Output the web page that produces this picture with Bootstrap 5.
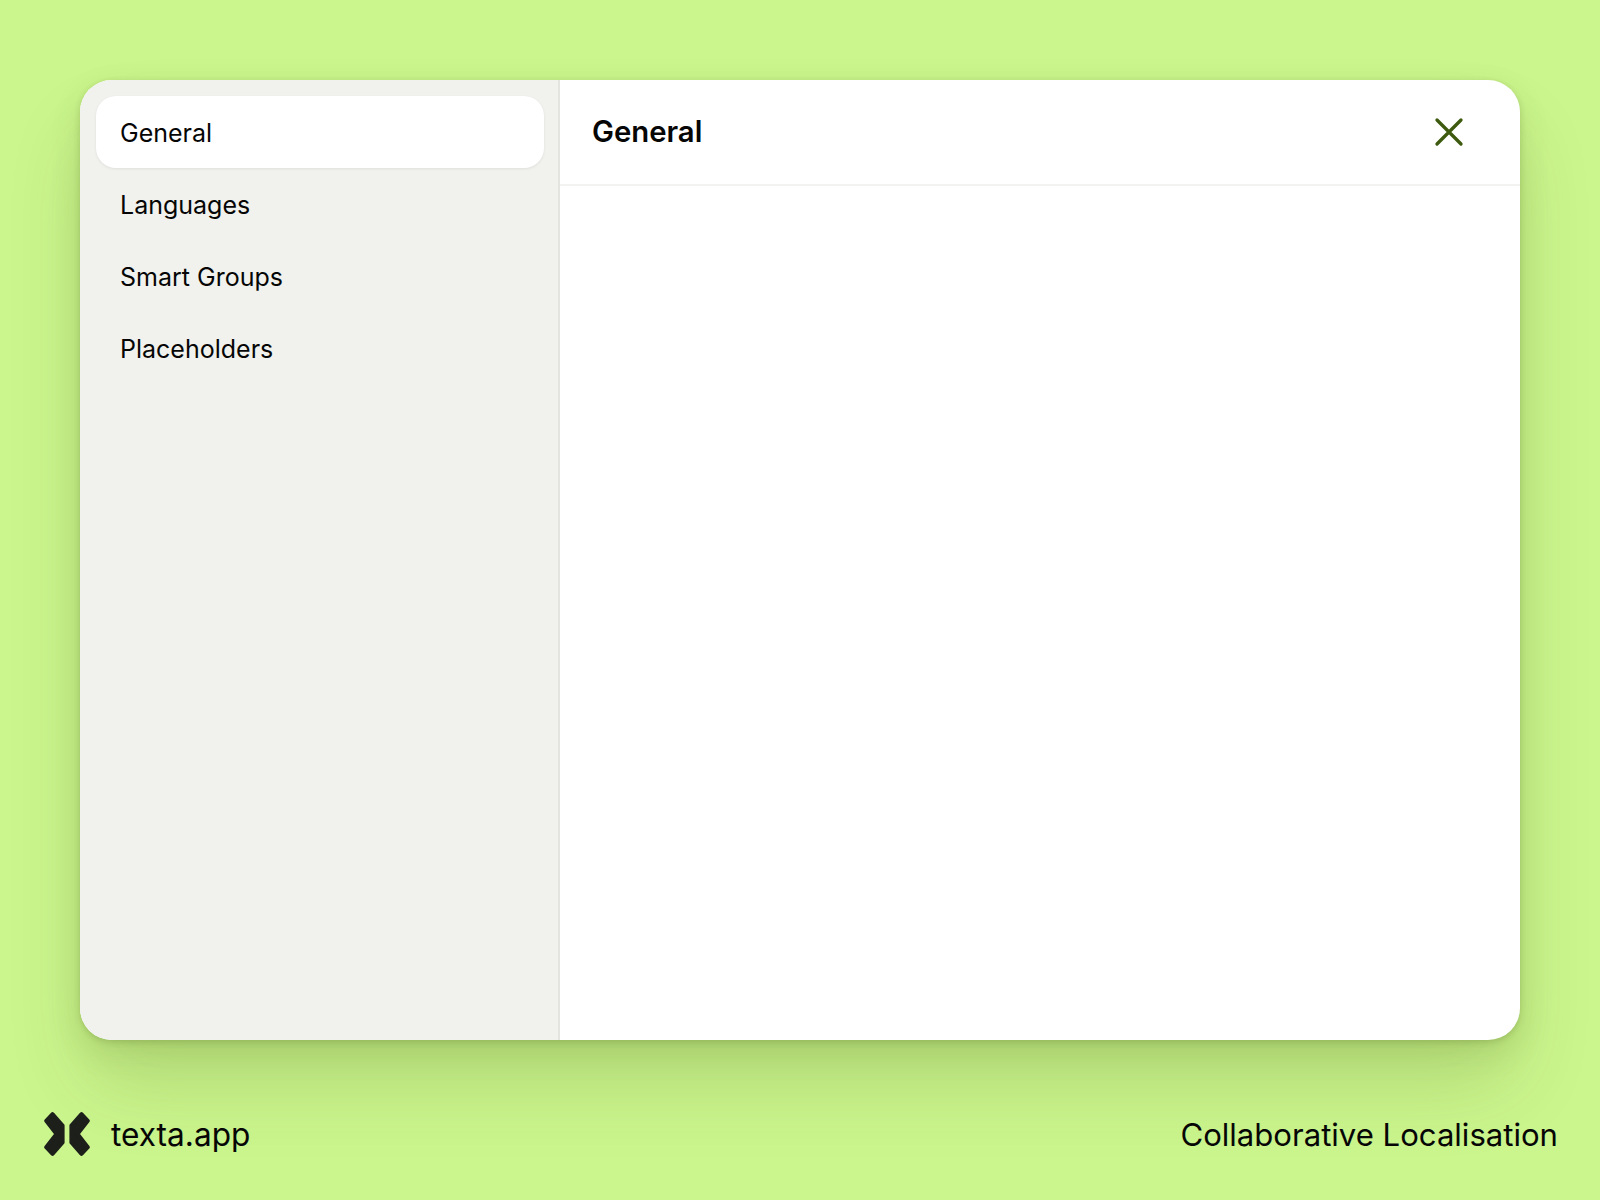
<!doctype html>
<html lang="en"><head><meta charset="utf-8"><title>texta.app</title>
<link href="https://cdn.jsdelivr.net/npm/bootstrap@5.3.0/dist/css/bootstrap.min.css" rel="stylesheet">
<style>
html,body{height:1200px;overflow:hidden}
body{background:#cbf58d;font-family:Inter,"Liberation Sans",sans-serif;color:#060606}
.shell{width:1440px;height:960px;margin:80px auto 0;border-radius:32px;box-shadow:0 2px 6px rgba(62,80,20,.2),0 12px 32px rgba(62,90,10,.12),0 48px 80px -8px rgba(62,90,10,.18)}
.side{width:480px;background:#f1f2ed;border-right:2px solid #e4e5e0;padding:16px 14px 16px 16px}
.side-item{height:72px;padding:3px 24px 0;font-size:25px;border-radius:20px;color:#060606;text-decoration:none}
.side-item.on{background:#fff;box-shadow:0 1px 3px rgba(0,0,0,.08)}
.head{height:106px;padding:0 55px 0 32px;border-bottom:2px solid #f3f3f2}
.head-title{font-size:29.3px;font-weight:600;margin:0;line-height:1}
.foot{padding:0 42px 0 43.5px;margin-top:72px;height:44px}
.foot-text{font-size:31.1px;margin-top:2px}
.foot-brand{font-size:31.6px}
.foot-gap{gap:21.5px}
</style></head><body>
<div class="shell d-flex overflow-hidden bg-white">
<nav class="side d-flex flex-column flex-shrink-0">
<a class="side-item on d-flex align-items-center" href="#">General</a>
<a class="side-item d-flex align-items-center" href="#">Languages</a>
<a class="side-item d-flex align-items-center" href="#">Smart Groups</a>
<a class="side-item d-flex align-items-center" href="#">Placeholders</a>
</nav>
<main class="flex-grow-1">
<div class="head d-flex align-items-center justify-content-between">
<h1 class="head-title">General</h1>
<svg width="32" height="32" viewBox="0 0 32 32" fill="none" stroke="#3d5a0f" stroke-width="3.3" stroke-linecap="round"><path d="M4 4 28 28M28 4 4 28"/></svg>
</div>
</main>
</div>
<footer class="foot d-flex align-items-center justify-content-between">
<div class="d-flex align-items-center foot-gap">
<svg width="46" height="44" viewBox="0 0 46 44" fill="#1c1f1a" stroke="#1c1f1a" stroke-width="4" stroke-linejoin="round"><path d="M8.5 2.2 18.6 13.5V30.5L8.5 41.8 2.2 35.2 12.5 22 2.2 8.8Z"/><path d="M37.5 2.2 27.4 13.5V30.5L37.5 41.8 43.8 35.2 33.5 22 43.8 8.8Z"/></svg>
<span class="foot-text foot-brand">texta.app</span>
</div>
<span class="foot-text">Collaborative Localisation</span>
</footer>
</body></html>
